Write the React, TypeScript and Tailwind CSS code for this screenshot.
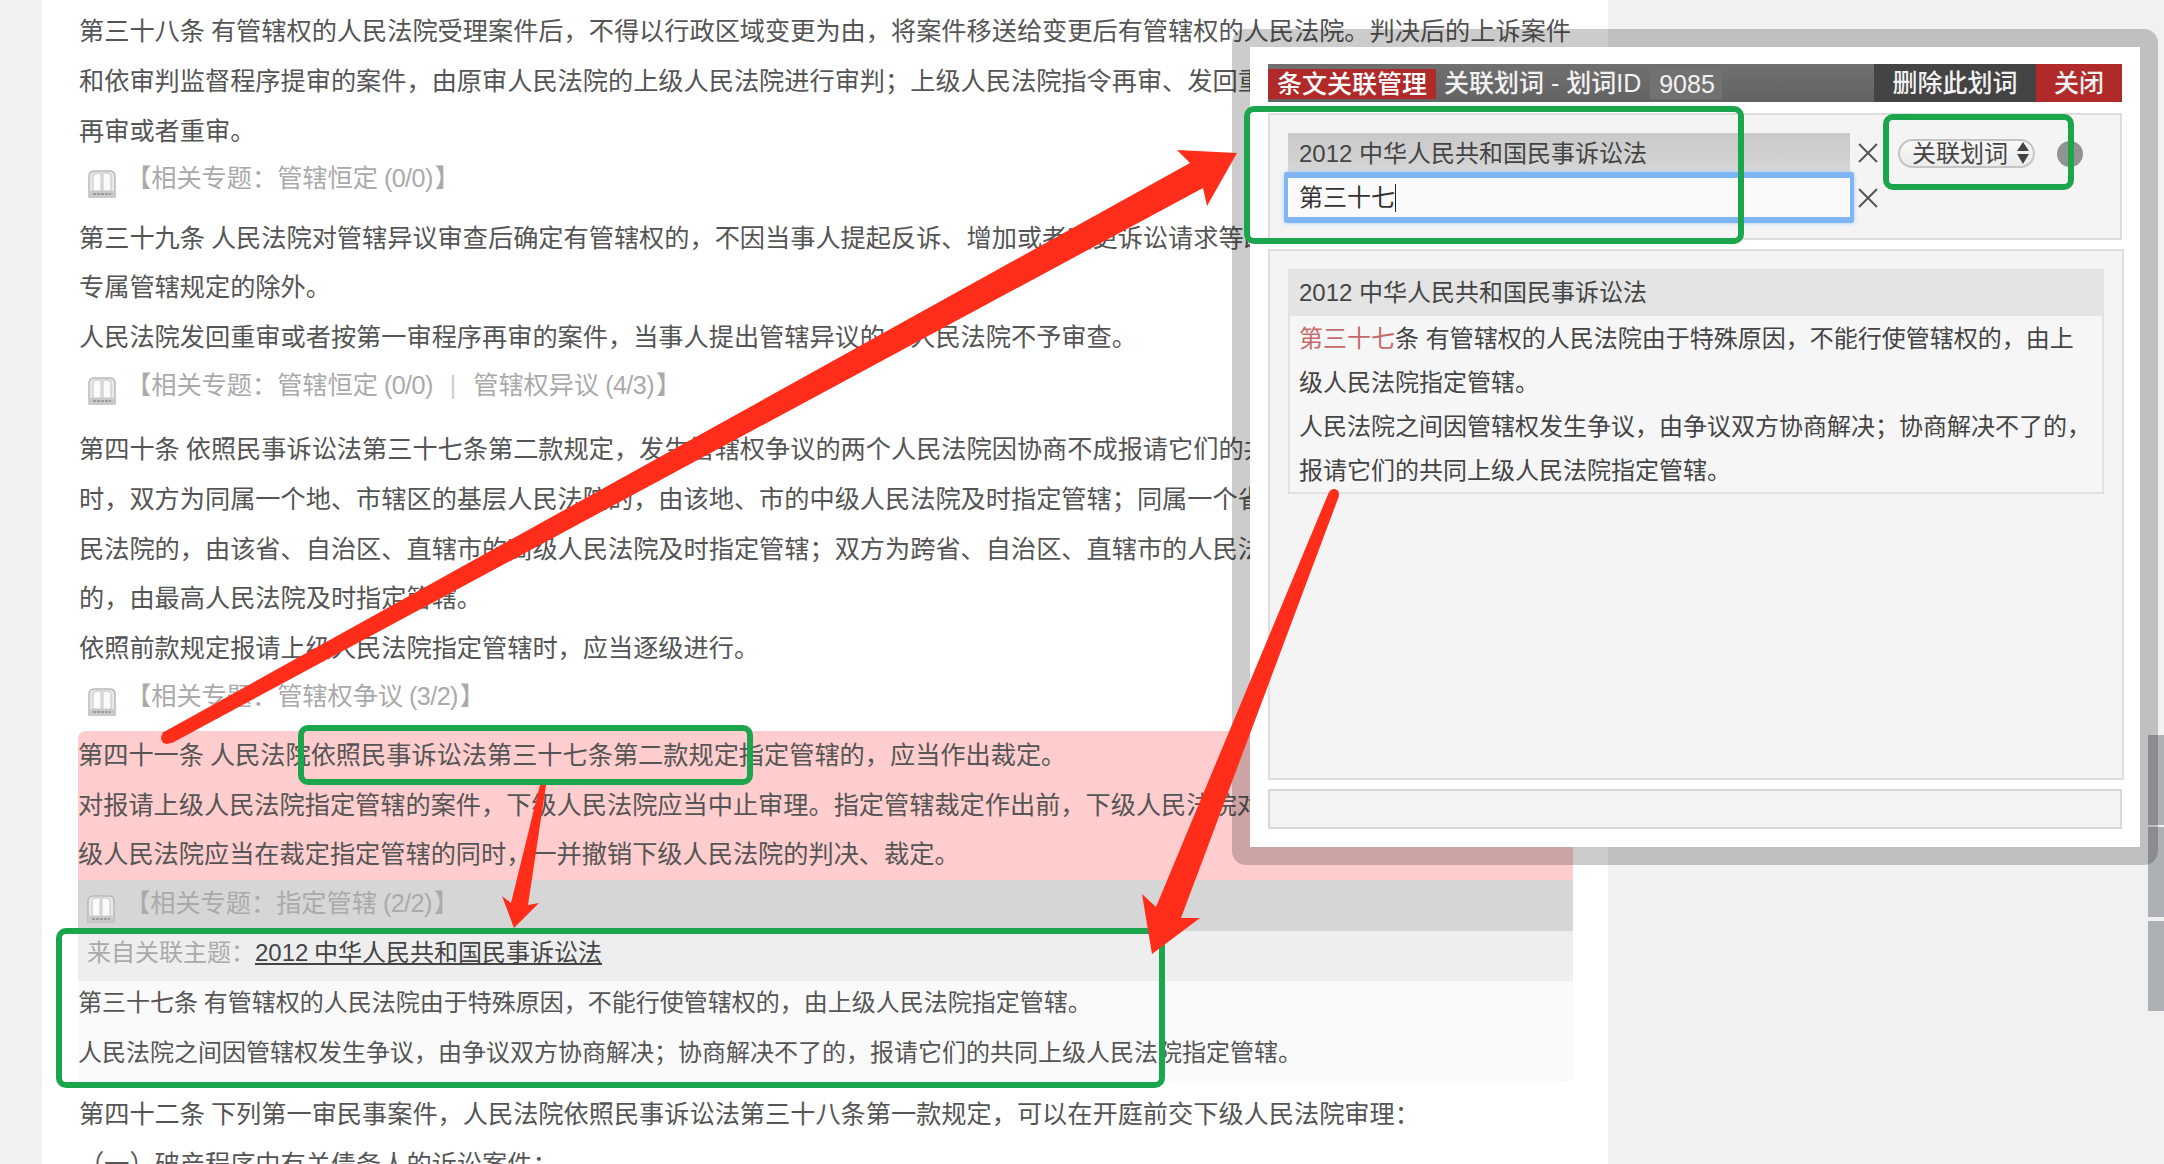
import React from "react";

const BookIcon = () => (
  <svg width="28" height="30" viewBox="0 0 28 30" className="shrink-0">
    <path d="M1 28V7Q1 2 7 2H21Q27 2 27 7V28Z" fill="#e8e8e8" stroke="#b9b9b9" strokeWidth="1.5" />
    <path d="M5 22V7Q5 4 9 4H13V22ZM15 22V4H19Q23 4 23 7V22Z" fill="#fbfbfb" stroke="#c4c4c4" strokeWidth="1" />
    <rect x="1" y="22" width="26" height="6" fill="#c9c9c9" />
    <path d="M5 25H23" stroke="#8f8f8f" strokeWidth="1.5" strokeDasharray="3 1" />
  </svg>
);

const Count = ({ children }: { children: React.ReactNode }) => (
  <span className="tracking-[-0.6px]">{children}</span>
);

const Topic = ({ children, className = "" }: { children: React.ReactNode; className?: string }) => (
  <div className={`flex items-center pl-[9px] text-[25.2px] text-[#aaaaaa] whitespace-nowrap ${className}`}>
    <span className="mt-[10px]"><BookIcon /></span>
    <span className="ml-[10px]">{children}</span>
  </div>
);

const CloseX = () => (
  <svg width="20" height="20" viewBox="0 0 20 20" className="shrink-0">
    <path d="M1 1L19 19M19 1L1 19" stroke="#555555" strokeWidth="2" fill="none" />
  </svg>
);

const GreenBox = ({ className }: { className: string }) => (
  <div className={`absolute rounded-[10px] border-[6px] border-[#1ba54c] ${className}`} />
);

export default function App() {
  return (
    <div className="relative h-[1164px] w-[2164px] overflow-hidden bg-[#f1f1f1] font-['Liberation_Sans','Noto_Sans_CJK_SC',sans-serif] text-[#555555]">
      {/* article column */}
      <main className="ml-[42px] h-[1164px] w-[1566px] overflow-hidden bg-white pl-[37px] pt-[6px] text-[25.2px] leading-[49.7px] whitespace-nowrap [word-spacing:-1px]">
        <div className="w-[1494px]">
          <p className="leading-[50px]">
            第三十八条 有管辖权的人民法院受理案件后，不得以行政区域变更为由，将案件移送给变更后有管辖权的人民法院。判决后的上诉案件
            <br />
            和依审判监督程序提审的案件，由原审人民法院的上级人民法院进行审判；上级人民法院指令再审、发回重审的案件，由原审人民法院
            <br />
            再审或者重审。
          </p>
          <Topic className="mb-[11.5px] h-[46px]">【相关专题：管辖恒定 <Count>(0/0)</Count><span className="ml-[2px]">】</span></Topic>
          <p>
            第三十九条 人民法院对管辖异议审查后确定有管辖权的，不因当事人提起反诉、增加或者变更诉讼请求等改变管辖，但违反级别管辖、
            <br />
            专属管辖规定的除外。
            <br />
            人民法院发回重审或者按第一审程序再审的案件，当事人提出管辖异议的，人民法院不予审查。
          </p>
          <Topic className="mb-[15.6px] h-[47px]">
            【相关专题：管辖恒定 <Count>(0/0)</Count>
            <span className="mx-[17px] text-[#cccccc]">|</span>管辖权异议 <Count>(4/3)</Count><span className="ml-[2px]">】</span>
          </Topic>
          <p>
            第四十条 依照民事诉讼法第三十七条第二款规定，发生管辖权争议的两个人民法院因协商不成报请它们的共同上级人民法院指定管辖
            <br />
            时，双方为同属一个地、市辖区的基层人民法院的，由该地、市的中级人民法院及时指定管辖；同属一个省、自治区、直辖市的两个人
            <br />
            民法院的，由该省、自治区、直辖市的高级人民法院及时指定管辖；双方为跨省、自治区、直辖市的人民法院
            <br />
            的，由最高人民法院及时指定管辖。
            <br />
            依照前款规定报请上级人民法院指定管辖时，应当逐级进行。
          </p>
          <Topic className="mb-[11.3px] h-[46px]">【相关专题：管辖权争议 <Count>(3/2)</Count><span className="ml-[2px]">】</span></Topic>

          <section className="-ml-[1px] h-[350px] rounded-[8px] bg-[#ffcdcd]">
            <p>
              第四十一条 人民法院依照民事诉讼法第三十七条第二款规定指定管辖的，应当作出裁定。
              <br />
              对报请上级人民法院指定管辖的案件，下级人民法院应当中止审理。指定管辖裁定作出前，下级人民法院对案件作出判决、裁定的，上
              <br />
              级人民法院应当在裁定指定管辖的同时，一并撤销下级人民法院的判决、裁定。
            </p>
            <Topic className="h-[51px] bg-[#d6d6d6] pb-[4px]">【相关专题：指定管辖 <Count>(2/2)</Count><span className="ml-[2px]">】</span></Topic>
            <div className="h-[50px] bg-[#eeeeee] pl-[9px] text-[24px] leading-[44px]">
              <span className="text-[#aaaaaa]">来自关联主题：</span>
              <span className="text-[#444444] underline">2012 中华人民共和国民事诉讼法</span>
            </div>
            <div className="h-[100px] rounded-b-[8px] bg-[#fafafa] text-[24px] leading-[44px]">
              <p className="mb-[6px]">第三十七条 有管辖权的人民法院由于特殊原因，不能行使管辖权的，由上级人民法院指定管辖。</p>
              <p>人民法院之间因管辖权发生争议，由争议双方协商解决；协商解决不了的，报请它们的共同上级人民法院指定管辖。</p>
            </div>
          </section>

          <p className="mt-[9px]">
            第四十二条 下列第一审民事案件，人民法院依照民事诉讼法第三十八条第一款规定，可以在开庭前交下级人民法院审理：
            <br />
            （一）破产程序中有关债务人的诉讼案件；
          </p>
        </div>
      </main>

      {/* right side markers */}
      <div className="absolute left-[2148px] top-[735px] flex w-[16px] flex-col">
        <div className="h-[90px] bg-[#adb0b4]" />
        <div className="mt-[2px] h-[90px] bg-[#adb0b4]" />
        <div className="mt-[4px] h-[90px] bg-[#adb0b4]" />
      </div>

      {/* dialog */}
      <div className="absolute left-[1232px] top-[29px] h-[836px] w-[926px] rounded-[14px] border-[18px] border-[rgba(0,0,0,0.2)] bg-white bg-clip-padding px-[18px] pt-[17px] text-[24px] text-[#444444]">
        <header className="flex h-[38px] w-[854px] bg-gradient-to-b from-[#707070] to-[#636363] text-[25px] font-medium leading-[38px] text-[#f2f2f2] whitespace-nowrap">
          <div className="mt-[5px] h-[30px] w-[168px] bg-[#b02a2a] pl-[9px] leading-[30px] text-white">条文关联管理</div>
          <div className="ml-[8px]">关联划词 - 划词ID</div>
          <div className="ml-[9px] mt-[5px] h-[30px] w-[72px] bg-[#727272] pl-[9px] leading-[30px]">9085</div>
          <div className="ml-auto flex">
            <div className="w-[162px] bg-[#444444] text-center">删除此划词</div>
            <div className="w-[86px] bg-[#b02a2a] text-center">关闭</div>
          </div>
        </header>

        <div className="mt-[11px] h-[127px] w-[854px] border-2 border-[#dddddd] bg-[#f4f4f4] pl-[18px] pt-[18px]">
          <div className="flex h-[40px] items-center">
            <div className="h-[40px] w-[562px] bg-gradient-to-b from-[#c9c9c9] to-[#d6d6d6] pl-[11px] leading-[41px] text-[#444444]">
              2012 中华人民共和国民事诉讼法
            </div>
            <div className="ml-[8px]"><CloseX /></div>
            <div className="ml-[20px] flex h-[29px] w-[137px] items-center rounded-full border-2 border-[#c4c4c4] bg-gradient-to-b from-[#f8f8f8] to-[#ececec] pl-[12px] leading-[25px]">
              <span>关联划词</span>
              <svg width="14" height="24" viewBox="0 0 14 24" className="ml-[8px]">
                <path d="M7 1L13 10H1Z" fill="#444444" />
                <path d="M7 23L13 13H1Z" fill="#444444" />
              </svg>
            </div>
            <div className="ml-[22px] mt-[2px] size-[26px] rounded-full bg-[#929292]" />
          </div>
          <div className="flex items-center">
            <div className="-ml-[4px] -mt-[1px] flex h-[51px] w-[570px] items-center rounded-[3px] border-x-[4px] border-y-[6px] border-[#7fb5f4] bg-[#fafafa] pl-[11px] text-[#333333] shadow-[0_0_4px_#a8cdf8]">
              <span>第三十七</span>
              <span className="h-[28px] w-px bg-[#222222]" />
            </div>
            <div className="ml-[4px]"><CloseX /></div>
          </div>
        </div>

        <div className="mt-[9px] h-[531px] w-[856px] border-2 border-[#dddddd] bg-[#f4f4f4] pl-[18px] pt-[18px]">
          <div className="h-[225px] w-[816px] border-2 border-[#e2e2e2] bg-[#f6f6f6]">
            <div className="h-[45px] bg-[#e4e4e4] pl-[9px] leading-[43px] text-[#444444]">2012 中华人民共和国民事诉讼法</div>
            <div className="pl-[9px] pt-[1px] leading-[44px] whitespace-nowrap">
              <span className="text-[#c46a6a]">第三十七</span>条 有管辖权的人民法院由于特殊原因，不能行使管辖权的，由上
              <br />
              级人民法院指定管辖。
              <br />
              人民法院之间因管辖权发生争议，由争议双方协商解决；协商解决不了的，
              <br />
              报请它们的共同上级人民法院指定管辖。
            </div>
          </div>
        </div>

        <div className="mt-[9px] h-[40px] w-[854px] border-2 border-[#d8d8d8] bg-[#f3f3f3]" />
      </div>

      {/* annotations */}
      <GreenBox className="left-[1244px] top-[106px] h-[138px] w-[500px]" />
      <GreenBox className="left-[1883px] top-[114px] h-[76px] w-[191px]" />
      <GreenBox className="left-[298px] top-[725px] h-[60px] w-[455px]" />
      <GreenBox className="left-[56px] top-[928px] h-[160px] w-[1109px]" />

      <svg className="pointer-events-none absolute left-0 top-0" width="2164" height="1164" viewBox="0 0 2164 1164">
        <g fill="#ff2d1a">
          <circle cx="167" cy="738" r="6" />
          <polygon points="162,733 172,743 1203,188 1207,206 1237,153 1177,150 1190,163" />
          <polygon points="540,785 546,785 528,905 539,903 514,928 502,896 511,903" />
          <circle cx="1334" cy="494" r="5" />
          <polygon points="1329,492 1339,496 1181,918 1200,918 1152,954 1142,894 1156,907" />
        </g>
      </svg>
    </div>
  );
}
